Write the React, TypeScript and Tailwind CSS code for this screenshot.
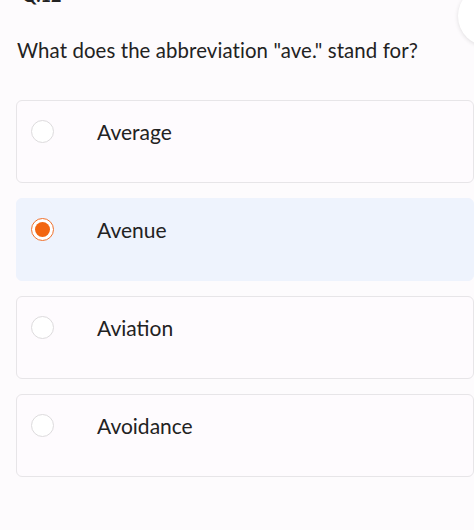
import React from "react";

const options = ["Average", "Avenue", "Aviation", "Avoidance"];

export default function App() {
  const selected = 1;
  return (
    <div
      className="relative w-[474px] h-[530px] overflow-hidden bg-[#fdfbfd] text-[#222222]"
      style={{ fontFamily: "Lato, 'Open Sans', sans-serif" }}
    >
      <div className="absolute left-[458px] top-[-14px] w-[60px] h-[60px] rounded-full bg-white shadow-[0_1px_4px_rgba(0,0,0,0.12)]" />
      <div className="pl-[22px] -mt-[14px] h-[18px] text-[18px] leading-[18px] font-bold text-[#222]">Q.12</div>
      <div className="pl-[17px] pt-[31px] text-[20.4px] leading-[30px] tracking-[0.1px]">
        What does the abbreviation "ave." stand for?
      </div>
      <div className="flex flex-col gap-[15px] pl-[16px] mt-[35px]">
        {options.map((o, i) => (
          <div
            key={o}
            className={
              i === selected
                ? "w-[458px] h-[83px] rounded-[6px] bg-[#eef3fd] border border-[#eef3fd] flex items-start pt-[18px] pl-[14px]"
                : "w-[458px] h-[83px] rounded-[6px] bg-[#fefbfe] border border-[#e7e5e8] flex items-start pt-[18px] pl-[14px]"
            }
          >
            <div className="w-[23px] flex justify-center">
              {i === selected ? (
                <div className="w-[23px] h-[23px] rounded-full border-[1.5px] border-[#f0712c] bg-white flex items-center justify-center mt-[1px] shrink-0">
                  <div className="w-[15px] h-[15px] rounded-full bg-[#f26510]" />
                </div>
              ) : (
                <div className="w-[23px] h-[23px] rounded-full border border-[#dddbdd] bg-white mt-[1px] shrink-0" />
              )}
            </div>
            <div className="ml-[43px] text-[21px] leading-[26px]">{o}</div>
          </div>
        ))}
      </div>
    </div>
  );
}
